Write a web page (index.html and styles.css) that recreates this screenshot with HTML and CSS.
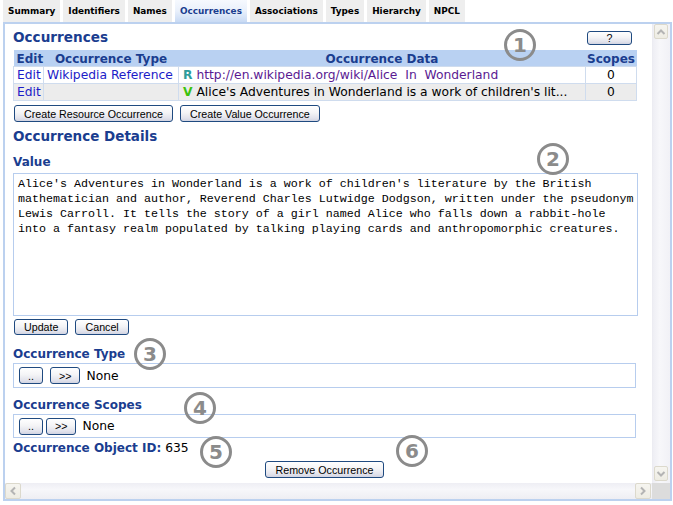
FILE: index.html
```html
<!DOCTYPE html>
<html>
<head>
<meta charset="utf-8">
<title>Occurrences</title>
<link rel="stylesheet" href="styles.css">
</head>
<body>
<div class="tabs">
  <span class="tab">Summary</span>
  <span class="tab">Identifiers</span>
  <span class="tab">Names</span>
  <span class="tab active">Occurrences</span>
  <span class="tab">Associations</span>
  <span class="tab">Types</span>
  <span class="tab">Hierarchy</span>
  <span class="tab">NPCL</span>
</div>
<div class="panel">
  <div class="viewport">
    <div class="content">
      <div class="head-row">
        <h1 class="title">Occurrences</h1>
        <button class="btn help">?</button>
      </div>
      <table class="occ">
        <colgroup><col class="c-edit"><col class="c-type"><col class="c-data"><col class="c-scopes"></colgroup>
        <thead>
          <tr><th class="left">Edit</th><th>Occurrence Type</th><th>Occurrence Data</th><th>Scopes</th></tr>
        </thead>
        <tbody>
          <tr class="r1"><td><a class="link">Edit</a></td><td><a class="link">Wikipedia Reference</a></td><td class="data"><b class="kind-r">R</b> <a class="visited">http://en.wikipedia.org/wiki/Alice&nbsp; In&nbsp; Wonderland</a></td><td class="num">0</td></tr>
          <tr class="r2"><td><a class="link">Edit</a></td><td></td><td class="data"><b class="kind-v">V</b> Alice's Adventures in Wonderland is a work of children's lit...</td><td class="num">0</td></tr>
        </tbody>
      </table>
      <div class="btn-row">
        <button class="btn">Create Resource Occurrence</button>
        <button class="btn">Create Value Occurrence</button>
      </div>
      <h1 class="title details">Occurrence Details</h1>
      <h2 class="label value-label">Value</h2>
      <textarea class="value" spellcheck="false">Alice's Adventures in Wonderland is a work of children's literature by the British
mathematician and author, Reverend Charles Lutwidge Dodgson, written under the pseudonym
Lewis Carroll. It tells the story of a girl named Alice who falls down a rabbit-hole
into a fantasy realm populated by talking playing cards and anthropomorphic creatures.</textarea>
      <div class="btn-row small-gap">
        <button class="btn">Update</button>
        <button class="btn">Cancel</button>
      </div>
      <h2 class="label type-label">Occurrence Type</h2>
      <div class="picker">
        <button class="btn pick">..</button>
        <button class="btn pick">&gt;&gt;</button>
        <span class="none">None</span>
      </div>
      <h2 class="label scopes-label">Occurrence Scopes</h2>
      <div class="picker tight">
        <button class="btn pick">..</button>
        <button class="btn pick">&gt;&gt;</button>
        <span class="none">None</span>
      </div>
      <div class="objid"><b>Occurrence Object ID:</b> 635</div>
      <div class="remove-row"><button class="btn">Remove Occurrence</button></div>

      <span class="callout n1">1</span>
      <span class="callout n2">2</span>
      <span class="callout n3">3</span>
      <span class="callout n4">4</span>
      <span class="callout n5">5</span>
      <span class="callout n6">6</span>
    </div>
  </div>
  <div class="vscroll">
    <span class="sb-btn"><svg width="10" height="8" viewBox="0 0 10 8"><polyline points="1.5,6 5,2.5 8.5,6" fill="none" stroke="#b4b4b4" stroke-width="2"/></svg></span>
    <span class="sb-btn"><svg width="10" height="8" viewBox="0 0 10 8"><polyline points="1.5,2 5,5.5 8.5,2" fill="none" stroke="#b4b4b4" stroke-width="2"/></svg></span>
  </div>
  <div class="hscroll">
    <span class="sb-btn"><svg width="8" height="10" viewBox="0 0 8 10"><polyline points="6,1.5 2.5,5 6,8.5" fill="none" stroke="#b4b4b4" stroke-width="2"/></svg></span>
    <span class="sb-btn"><svg width="8" height="10" viewBox="0 0 8 10"><polyline points="2,1.5 5.5,5 2,8.5" fill="none" stroke="#b4b4b4" stroke-width="2"/></svg></span>
  </div>
  <div class="corner"></div>
</div>
</body>
</html>
```
FILE: styles.css
```css
html, body {
  margin: 0;
  padding: 0;
  background: #ffffff;
}
body {
  font-family: "DejaVu Sans", Verdana, sans-serif;
  font-size: 12.3px;
  color: #000000;
  width: 673px;
  height: 505px;
  overflow: hidden;
}

/* ---------- tabs ---------- */
.tabs {
  display: flex;
  gap: 3px;
  height: 22px;
  padding-left: 3px;
}
.tab {
  display: block;
  height: 22px;
  line-height: 22px;
  padding: 0 5px;
  background: #eeeeee;
  font-family: "DejaVu Sans", Verdana, sans-serif;
  font-weight: bold;
  font-size: 8.9px;
  color: #000000;
}
.tab.active {
  background: linear-gradient(#f6f9fe, #e9f0fb 50%, #c8daf4);
  color: #1a3d8f;
}

/* ---------- panel ---------- */
.panel {
  margin-left: 3px;
  width: 665px;
  height: 475px;
  border: 2px solid #bcd1ef;
  display: grid;
  grid-template-columns: 647px 18px;
  grid-template-rows: 459px 16px;
}
.viewport {
  overflow: hidden;
  background: #ffffff;
}
.content {
  position: relative;
  padding: 5px 0 0 8px;
}

.title {
  margin: 0;
  font-size: 13.6px;
  line-height: 17px;
  font-weight: bold;
  color: #1a3d8f;
}
.head-row {
  width: 619px;
  padding-right: 4px;
  height: 17px;
  display: flex;
  justify-content: space-between;
  align-items: flex-start;
}
.label {
  margin: 0;
  font-size: 12px;
  line-height: 15px;
  font-weight: bold;
  color: #1a3d8f;
}

/* ---------- buttons ---------- */
.btn {
  font-family: "Liberation Sans", Arial, sans-serif;
  font-size: 10.7px;
  color: #000000;
  height: 17px;
  padding: 0 9px;
  margin: 0;
  border: 1px solid #1f4a80;
  border-radius: 3px;
  background: linear-gradient(#ffffff, #f4f4f6 45%, #e2e3ec 80%, #d2d4e2);
  line-height: 14px;
}
.help {
  margin-top: 2px;
  width: 45px;
  height: 14px;
  line-height: 11px;
  padding: 0;
}
.btn-row {
  display: flex;
  gap: 7px;
  margin-top: 4px;
  padding-left: 1px;
}
.btn-row.small-gap {
  margin-top: 3px;
}
.btn-row.small-gap .btn {
  height: 16px;
}

/* ---------- table ---------- */
.occ {
  position: relative;
  z-index: 1;
  margin-top: 4px;
  width: 623px;
  border-collapse: collapse;
  table-layout: fixed;
}
.c-edit { width: 30px; }
.c-type { width: 135px; }
.c-data { width: 407px; }
.c-scopes { width: 51px; }
.occ th {
  background: #b9d1f2;
  color: #1a3d8f;
  font-size: 12px;
  font-weight: bold;
  height: 15px;
  padding: 1px 0 0 0;
  text-align: center;
  line-height: 14px;
}
.occ th.left {
  text-align: left;
  padding-left: 3px;
}
.occ td {
  height: 16px;
  padding: 0 0 0 3px;
  border: 1px solid #cfdcee;
  line-height: 15px;
  white-space: nowrap;
  overflow: hidden;
}
.occ td.data { padding-left: 4px; }
.occ td.num { text-align: center; padding: 0; }
.occ tr.r1 td { background: #ffffff; }
.occ tr.r2 td { background: #ececec; }
.link { color: #1c1cc8; }
.visited { color: #5a1a92; }
.kind-r { color: #2f9c9c; }
.kind-v { color: #3bc20c; }

/* ---------- details ---------- */
.details {
  margin-top: 6px;
  font-size: 13.5px;
}
.value-label { margin-top: 10px; }
.value {
  position: relative;
  z-index: 1;
  display: block;
  margin: 3px 0 0 0;
  width: 625px;
  height: 143px;
  box-sizing: border-box;
  padding: 3px 0 0 4px;
  border: 1px solid #b7cdee;
  background: #ffffff;
  font-family: "Liberation Mono", "Courier New", monospace;
  font-size: 11.67px;
  line-height: 15px;
  color: #000000;
  white-space: pre;
  overflow: hidden;
  resize: none;
  outline: none;
}
.type-label { margin-top: 12px; }
.scopes-label { margin-top: 10px; }
.picker {
  margin-top: 1px;
  width: 623px;
  height: 25px;
  box-sizing: border-box;
  border: 1px solid #b7cdee;
  display: flex;
  align-items: center;
  padding-left: 5px;
  gap: 7px;
}
.picker.tight { height: 24px; gap: 3px; }
.picker.tight .none { margin-left: 3px; }
.pick {
  height: 17px;
  padding: 0 8px;
}
.none {
  margin-left: -1px;
}
.objid {
  margin-top: 3px;
  line-height: 15px;
}
.objid b {
  font-size: 12px;
  color: #1a3d8f;
}
.remove-row {
  width: 623px;
  display: flex;
  justify-content: center;
  margin-top: 5px;
}
.remove-row .btn { height: 17px; }

/* ---------- callouts ---------- */
.callout {
  position: absolute;
  z-index: 2;
  width: 26px;
  height: 26px;
  border: 3px solid #8b8b8b;
  border-radius: 50%;
  color: #8b8b8b;
  font-family: "DejaVu Sans", sans-serif;
  font-weight: bold;
  font-size: 20px;
  line-height: 26px;
  text-align: center;
}
.n1 { left: 499px; top: 5px; }
.n2 { left: 532px; top: 119px; }
.n3 { left: 129px; top: 314px; }
.n4 { left: 179px; top: 368px; }
.n5 { left: 195px; top: 412px; }
.n6 { left: 391px; top: 411px; }

/* ---------- scrollbars ---------- */
.vscroll {
  background: linear-gradient(90deg, #eeeef4, #f7f7fa 40%, #f1f1f6);
  border-left: 1px solid #ececf2;
  display: flex;
  flex-direction: column;
  justify-content: space-between;
  padding: 0 0 2px 1px;
}
.hscroll {
  background: linear-gradient(#eeeef4, #f7f7fa 40%, #eeeef3);
  display: flex;
  justify-content: space-between;
  padding: 0 1px 0 0;
}
.corner {
  background: #dcdcdc;
}
.sb-btn {
  width: 14px;
  height: 15px;
  box-sizing: border-box;
  border: 1px solid #dcd9cc;
  border-radius: 2px;
  background: linear-gradient(#f6f5f0, #eeece3);
  display: flex;
  align-items: center;
  justify-content: center;
}
.hscroll .sb-btn {
  width: 16px;
  height: 16px;
}
```
